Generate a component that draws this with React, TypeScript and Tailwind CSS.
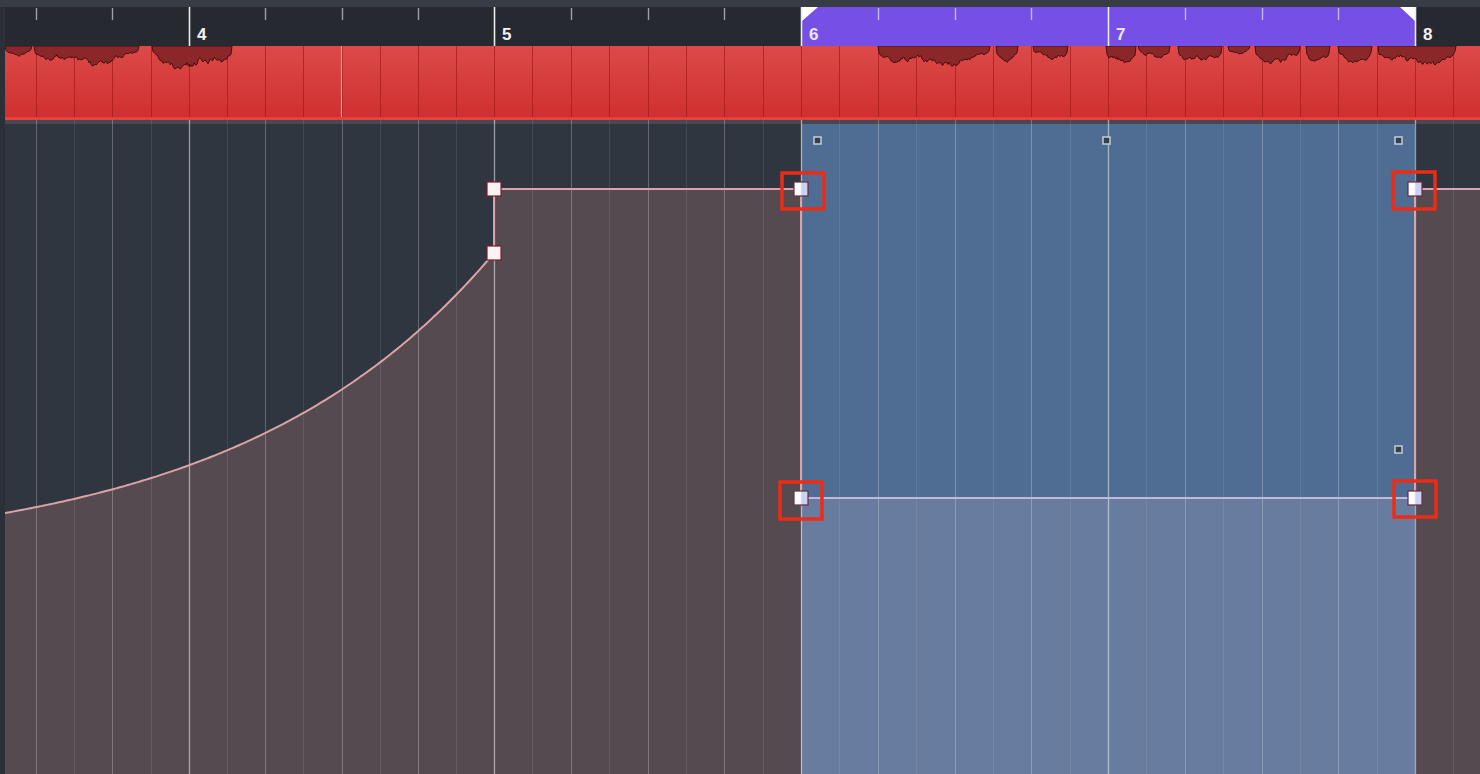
import React from "react";

// bar line positions measured from the timeline (bars 3..9)
const BARS: Record<number, number> = { 3: -118, 4: 189, 5: 494, 6: 801, 7: 1108, 8: 1415, 9: 1722 };
const px = (x: number) => Math.round(x) + 0.5;

type Kind = "bar" | "beat" | "eighth";
const grid: { x: number; kind: Kind }[] = [];
for (let b = 3; b <= 8; b++) {
  const a = BARS[b];
  const w = (BARS[b + 1] - a) / 8;
  for (let i = 0; i < 8; i++) {
    const x = a + i * w;
    if (x < 5 || x > 1480) continue;
    grid.push({ x: px(x), kind: i === 0 ? "bar" : i % 2 === 0 ? "beat" : "eighth" });
  }
}

// seeded noise for the waveform
let seed = 11;
const rnd = () => {
  seed = (seed * 16807) % 2147483647;
  return (seed - 1) / 2147483646;
};

const waveSegments: [number, number, number][] = [
  [5, 32, 11],
  [34, 139, 21],
  [152, 232, 27],
  [878, 990, 23],
  [996, 1018, 18],
  [1033, 1068, 15],
  [1106, 1136, 24],
  [1138, 1170, 15],
  [1178, 1222, 22],
  [1228, 1250, 10],
  [1255, 1300, 21],
  [1306, 1330, 20],
  [1338, 1372, 19],
  [1378, 1456, 23],
];

const wavePaths = waveSegments.map(([a, b, d]) => {
  let p = `M${a},46`;
  const ph = rnd() * 6;
  let prev = 0;
  for (let x = a; x <= b; x += 1) {
    const t = (x - a) / (b - a);
    const env = Math.pow(Math.sin(Math.PI * t), 0.3);
    const raw =
      0.68 + 0.14 * Math.sin(x * 0.1 + ph) + 0.08 * Math.sin(x * 0.42 + ph * 3) + 0.3 * (rnd() - 0.5);
    const n = x === a ? raw : prev * 0.45 + raw * 0.55;
    prev = n;
    p += ` L${x},${(46 + d * env * n).toFixed(1)}`;
  }
  return p + ` L${b},46 Z`;
});

// exponential automation ramp
const K = 1.9;
const curvePts: string[] = [];
for (let x = 5; x <= 494; x += 3) {
  const t = (x - 5) / 489;
  const y = 513 - (260 * (Math.exp(K * t) - 1)) / (Math.exp(K) - 1);
  curvePts.push(`${x},${y.toFixed(2)}`);
}
curvePts.push("494,253");
const curve = "M" + curvePts.join(" L");

const gridStroke = (k: Kind) =>
  k === "bar" ? "rgba(255,255,255,0.5)" : k === "beat" ? "rgba(255,255,255,0.25)" : "rgba(255,255,255,0.09)";

const Ruler = () => (
  <div className="relative h-[39px] bg-[#26292f]">
    <svg className="absolute inset-0" width={1475} height={39} viewBox="5 7 1475 39">
      <rect x={801.5} y={7} width={614} height={39} fill="#764fe6" />
      <polygon points="802,7 818,7 802,21" fill="#ffffff" />
      <polygon points="1400,7 1415,7 1415,21" fill="#ffffff" />
      {grid
        .filter((g) => g.kind === "beat")
        .map((g) => (
          <line
            key={g.x}
            x1={g.x}
            x2={g.x}
            y1={8}
            y2={20}
            stroke={g.x > 801 && g.x < 1415 ? "#c8b8f4" : "#9ba1a9"}
            strokeWidth={1.4}
          />
        ))}
      {[4, 5, 6, 7, 8].map((b) => (
        <line key={b} x1={px(BARS[b])} x2={px(BARS[b])} y1={7} y2={46} stroke="#ececec" strokeWidth={1.6} />
      ))}
    </svg>
    {[4, 5, 6, 7, 8].map((b) => (
      <span
        key={b}
        className={`absolute top-[19px] text-[17px] font-bold leading-none font-['Liberation_Sans',Arial,sans-serif] ${
          b === 6 || b === 7 ? "text-[#ede8ff]" : "text-[#f2f2f2]"
        }`}
        style={{ left: BARS[b] + 3 }}
      >
        {b}
      </span>
    ))}
  </div>
);

const Lane = () => (
  <div className="h-[74px]">
    <svg width={1475} height={74} viewBox="5 46 1475 74" className="block">
      <defs>
        <linearGradient id="lane" x1="0" y1="0" x2="0" y2="1">
          <stop offset="0" stopColor="#dc4a49" />
          <stop offset="1" stopColor="#ce2f2e" />
        </linearGradient>
      </defs>
      <rect x={5} y={46} width={1475} height={74} fill="url(#lane)" />
      {grid.map((g) => (
        <line key={g.x} x1={g.x} x2={g.x} y1={46} y2={118} stroke="#a81a1c" strokeOpacity={0.75} strokeWidth={1} />
      ))}
      <line x1={341.5} x2={341.5} y1={46} y2={118} stroke="#f39a98" strokeWidth={1.2} />
      {wavePaths.map((d, i) => (
        <path key={i} d={d} fill="#8a2829" stroke="#3a0b0d" strokeWidth={0.9} strokeLinejoin="round" />
      ))}
      <rect x={5} y={117} width={1475} height={3} fill="#e8403e" />
    </svg>
  </div>
);

const Node = ({ x, y, sel }: { x: number; y: number; sel?: boolean }) => (
  <rect
    x={x - 7}
    y={y - 7}
    width={14}
    height={14}
    fill={sel ? "url(#nodeSel)" : "#fff2f4"}
    stroke={sel ? "#6c2a3c" : "#7f1c2b"}
    strokeWidth={1.2}
  />
);

const Handle = ({ x, y }: { x: number; y: number }) => (
  <rect x={x - 3.5} y={y - 3.5} width={7} height={7} fill="#36404c" stroke="#c3cedc" strokeWidth={1.5} />
);

const Frame = ({ x, y, w, h }: { x: number; y: number; w: number; h: number }) => (
  <rect x={x} y={y} width={w} height={h} fill="none" stroke="#ee2b16" strokeWidth={3.5} />
);

const Automation = () => (
  <div className="flex-1">
    <svg width={1475} height={654} viewBox="5 120 1475 654" className="block">
      <defs>
        <linearGradient id="nodeSel" x1="0" y1="0" x2="1" y2="0">
          <stop offset="0.45" stopColor="#ffffff" />
          <stop offset="0.55" stopColor="#c9d3f1" />
        </linearGradient>
      </defs>
      <rect x={5} y={120} width={1475} height={654} fill="#30363f" />
      <path d={`${curve} L494,189 L801,189 L801,774 L5,774 Z`} fill="#554a50" />
      <rect x={1415} y={189} width={65} height={585} fill="#554a50" />
      <rect x={801} y={124} width={614} height={374} fill="#4f6d92" />
      <rect x={801} y={498} width={614} height={276} fill="#687c9f" />
      <rect x={5} y={120} width={1475} height={4} fill="#454a52" />
      {grid.map((g) => (
        <line key={g.x} x1={g.x} x2={g.x} y1={120} y2={774} stroke={gridStroke(g.kind)} strokeWidth={g.kind === "bar" ? 1.3 : 1} />
      ))}
      <path
        d={`${curve} L494,189 L801,189 L801,498`}
        fill="none"
        stroke="#dba2a8"
        strokeWidth={2}
        strokeLinejoin="round"
      />
      <line x1={801} x2={1415} y1={498} y2={498} stroke="#c4b6dc" strokeWidth={2} />
      <path d="M1415,498 L1415,189 L1480,189" fill="none" stroke="#d6a6b4" strokeWidth={2} />
      <Handle x={817.5} y={140.5} />
      <Handle x={1106.5} y={140.5} />
      <Handle x={1398.5} y={140.5} />
      <Handle x={1398.5} y={449.5} />
      <Node x={494} y={189} />
      <Node x={494} y={253} />
      <Node x={801} y={189} sel />
      <Node x={801} y={498} sel />
      <Node x={1415} y={189} sel />
      <Node x={1415} y={498} sel />
      <Frame x={782} y={173} w={42} h={36} />
      <Frame x={1393} y={172} w={42} h={37} />
      <Frame x={780} y={482} w={42} h={37} />
      <Frame x={1394} y={481} w={42} h={36} />
    </svg>
  </div>
);

export default function App() {
  return (
    <div className="flex h-[774px] w-[1480px] flex-col overflow-hidden bg-[#30363f]">
      <div className="h-[7px] bg-[#383d45]" />
      <div className="flex flex-1">
        <div className="w-[5px] bg-[#2b3038]" />
        <div className="flex flex-1 flex-col">
          <Ruler />
          <Lane />
          <Automation />
        </div>
      </div>
    </div>
  );
}
